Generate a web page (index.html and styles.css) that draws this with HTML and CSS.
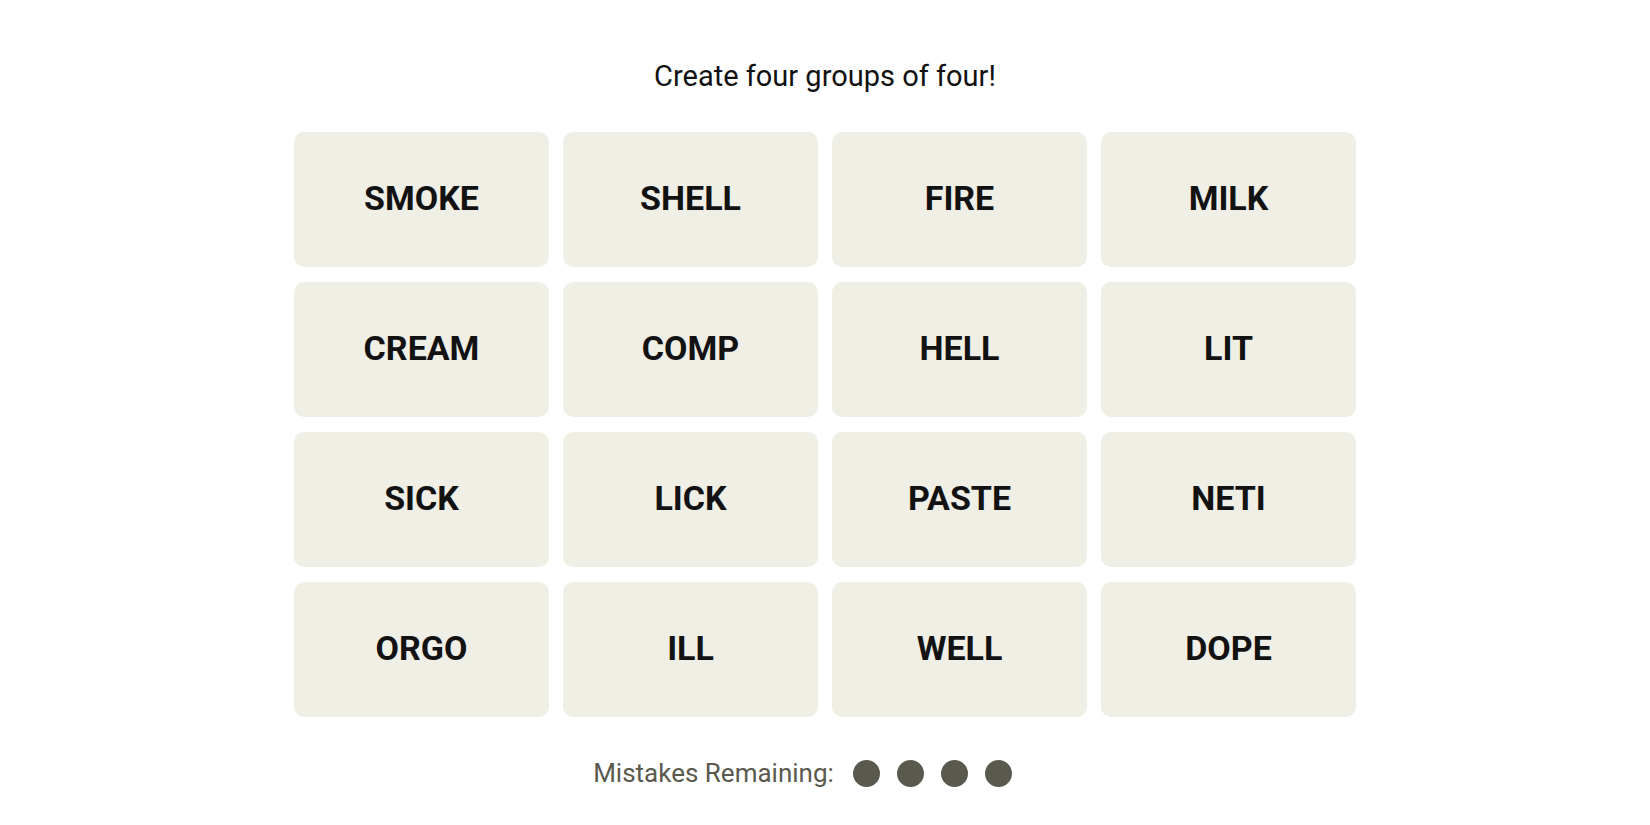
FILE: index.html
```html
<!DOCTYPE html>
<html lang="en">
<head>
<meta charset="utf-8">
<title>Connections</title>
<link rel="stylesheet" href="styles.css">
</head>
<body>
<main class="game">
  <p class="prompt">Create four groups of four!</p>
  <div class="board">
    <button class="tile">SMOKE</button>
    <button class="tile">SHELL</button>
    <button class="tile">FIRE</button>
    <button class="tile">MILK</button>
    <button class="tile">CREAM</button>
    <button class="tile">COMP</button>
    <button class="tile">HELL</button>
    <button class="tile">LIT</button>
    <button class="tile">SICK</button>
    <button class="tile">LICK</button>
    <button class="tile">PASTE</button>
    <button class="tile">NETI</button>
    <button class="tile">ORGO</button>
    <button class="tile">ILL</button>
    <button class="tile">WELL</button>
    <button class="tile">DOPE</button>
  </div>
  <div class="mistakes">
    <span class="mistakes-label">Mistakes Remaining:</span>
    <span class="dots">
      <span class="dot"></span>
      <span class="dot"></span>
      <span class="dot"></span>
      <span class="dot"></span>
    </span>
  </div>
</main>
</body>
</html>
```
FILE: styles.css
```css
html, body {
  margin: 0;
  padding: 0;
  background: #ffffff;
}

body {
  font-family: Roboto, "Liberation Sans", sans-serif;
  color: #121212;
}

.game {
  display: flex;
  flex-direction: column;
  align-items: center;
  padding-top: 58px;
}

.prompt {
  margin: 0;
  font-size: 29px;
  line-height: 36px;
  font-weight: 400;
  color: #121212;
}

.board {
  margin-top: 38px;
  display: grid;
  grid-template-columns: repeat(4, 255px);
  grid-auto-rows: 135px;
  gap: 15px 14px;
}

.tile {
  border: none;
  border-radius: 10px;
  background: #efefe6;
  color: #121212;
  font-family: Roboto, "Liberation Sans", sans-serif;
  font-weight: 700;
  font-size: 34px;
  padding: 0 0 4px 0;
  display: flex;
  align-items: center;
  justify-content: center;
}

.mistakes {
  margin-top: 38px;
  height: 36px;
  display: flex;
  align-items: center;
  gap: 19px;
  padding-right: 45px;
  color: #5a594e;
}

.mistakes-label {
  font-size: 26px;
  line-height: 36px;
}

.dots {
  display: flex;
  gap: 17px;
}

.dot {
  width: 27px;
  height: 27px;
  border-radius: 50%;
  background: #5a594e;
}
```
